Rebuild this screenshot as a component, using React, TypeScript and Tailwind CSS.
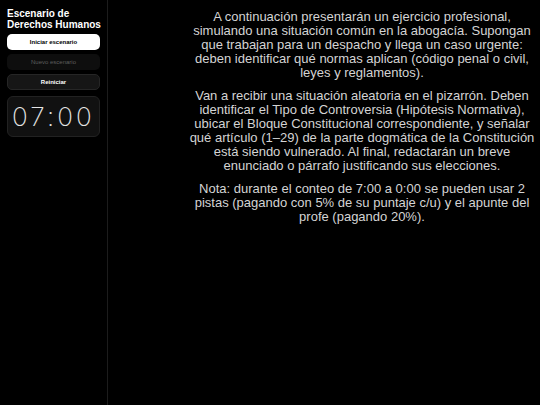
export default function App() {
  return (
    <div className="flex h-[405px] w-[540px] bg-black text-[#d4d4d4]" style={{ fontFamily: '"Liberation Sans", Arial, sans-serif' }}>
      <aside className="flex w-[108px] shrink-0 flex-col border-r border-[#1c1c1c] px-[7px] pt-[8px]">
        <h1 className="whitespace-nowrap text-[10px] font-bold leading-[11px] text-white">
          Escenario de
          <br />
          Derechos Humanos
        </h1>
        <div className="mt-[4px] flex flex-col gap-[4px]">
          <button className="h-[16px] rounded-[5px] bg-white text-[6px] font-bold text-black">
            Iniciar escenario
          </button>
          <button className="h-[16px] rounded-[5px] bg-[#0e0e0e] text-[6px] text-[#5e5e5e]">
            Nuevo escenario
          </button>
          <button className="h-[16px] rounded-[5px] border border-[#262626] bg-[#161616] text-[6px] font-bold text-white">
            Reiniciar
          </button>
        </div>
        <div
          className="mt-[6px] flex h-[41px] items-center justify-center rounded-[6px] border border-[#222] bg-[#111] text-[26px] font-extralight tracking-[0.12em] text-[#e5e5e5]"
          style={{ fontFamily: 'Inter, "Liberation Sans", sans-serif' }}
        >
          07:00
        </div>
      </aside>
      <main className="flex flex-1 justify-center pl-[80px] pr-[4px] pt-[10px]">
        <div className="flex w-full flex-col gap-[9px] text-center text-[13px] leading-[14px]">
          <p>
            A continuación presentarán un ejercicio profesional, simulando una situación común en la abogacía. Supongan que trabajan para un despacho y llega un caso urgente: deben identificar qué normas aplican (código penal o civil, leyes y reglamentos).
          </p>
          <p>
            Van a recibir una situación aleatoria en el pizarrón. Deben identificar el Tipo de Controversia (Hipótesis Normativa), ubicar el Bloque Constitucional correspondiente, y señalar qué artículo (1–29) de la parte dogmática de la Constitución está siendo vulnerado. Al final, redactarán un breve enunciado o párrafo justificando sus elecciones.
          </p>
          <p>
            Nota: durante el conteo de 7:00 a 0:00 se pueden usar 2 pistas (pagando con 5% de su puntaje c/u) y el apunte del profe (pagando 20%).
          </p>
        </div>
      </main>
    </div>
  );
}
